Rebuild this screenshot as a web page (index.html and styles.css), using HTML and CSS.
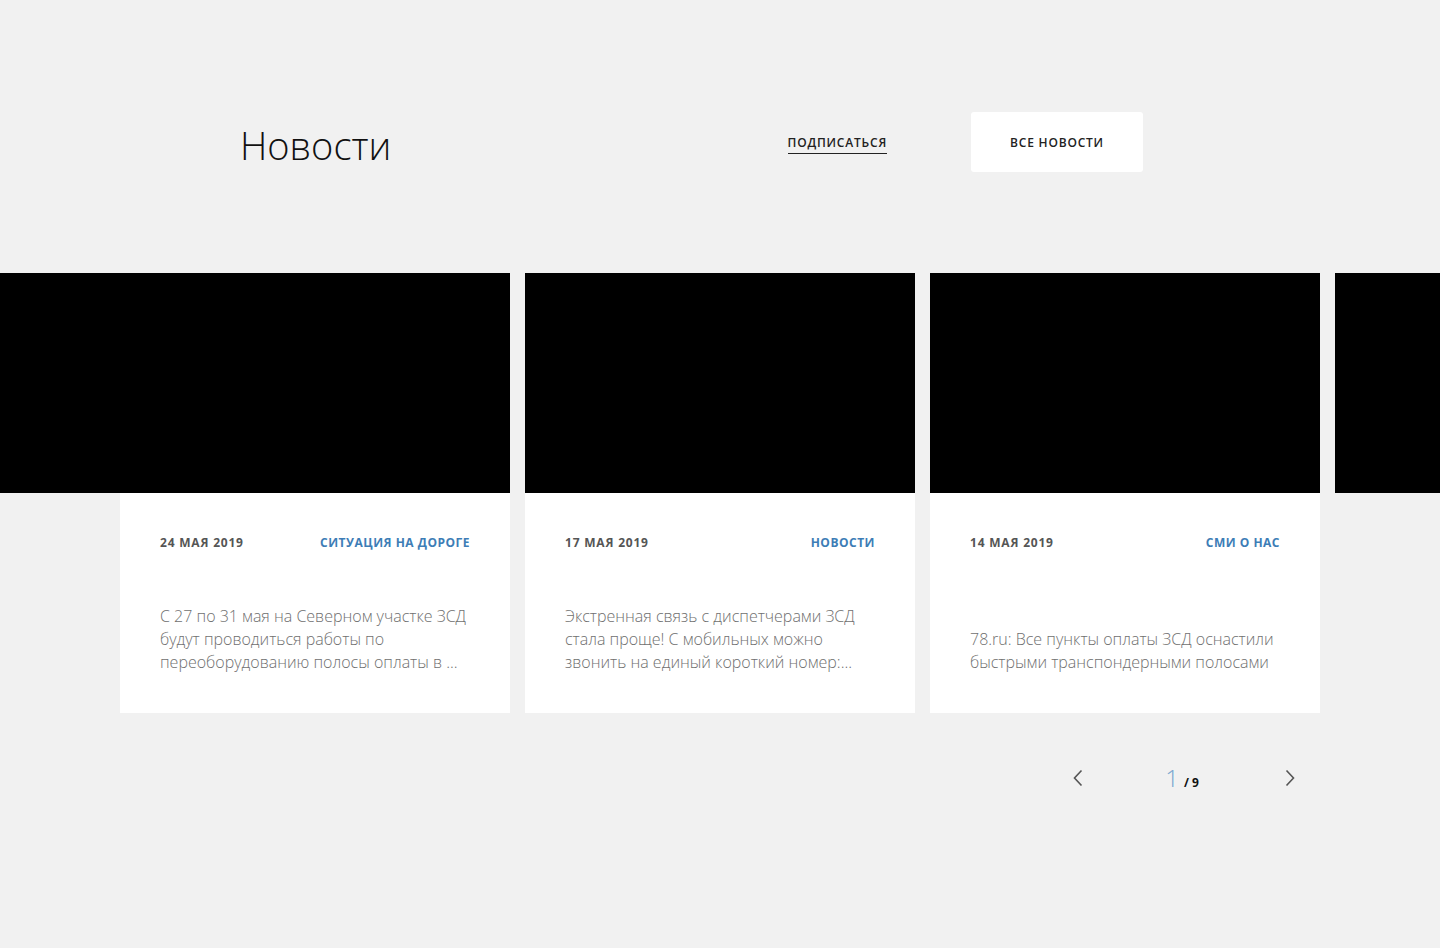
FILE: index.html
```html
<!DOCTYPE html>
<html lang="ru">
<head>
<meta charset="utf-8">
<title>Новости</title>
<link rel="stylesheet" href="styles.css">
</head>
<body>
<div class="page">
  <header class="head">
    <h1 class="title">Новости</h1>
    <a class="subscribe" href="#">Подписаться</a>
    <a class="all-btn" href="#">Все новости</a>
  </header>

  <section class="slider">
    <div class="track">
      <article class="card card-wide">
        <div class="pic"></div>
        <div class="body">
          <div class="meta"><span class="date">24 мая 2019</span><span class="cat">Ситуация на дороге</span></div>
          <p class="text">С 27 по 31 мая на Северном участке ЗСД будут проводиться работы по переоборудованию полосы оплаты в ...</p>
        </div>
      </article>
      <article class="card">
        <div class="pic"></div>
        <div class="body">
          <div class="meta"><span class="date">17 мая 2019</span><span class="cat">Новости</span></div>
          <p class="text">Экстренная связь с диспетчерами ЗСД стала проще! С мобильных можно звонить на единый короткий номер:...</p>
        </div>
      </article>
      <article class="card">
        <div class="pic"></div>
        <div class="body">
          <div class="meta"><span class="date">14 мая 2019</span><span class="cat">СМИ о нас</span></div>
          <p class="text">78.ru: Все пункты оплаты ЗСД оснастили быстрыми транспондерными полосами</p>
        </div>
      </article>
      <article class="card card-peek">
        <div class="pic"></div>
      </article>
    </div>
  </section>

  <nav class="pager">
    <button class="arrow" aria-label="Назад">
      <svg width="12" height="18" viewBox="0 0 12 18"><path d="M9.5 1.5 L2.5 9 L9.5 16.5" fill="none" stroke="#555" stroke-width="1.6"/></svg>
    </button>
    <div class="count"><span class="cur">1</span><span class="total">/ 9</span></div>
    <button class="arrow" aria-label="Вперёд">
      <svg width="12" height="18" viewBox="0 0 12 18"><path d="M2.5 1.5 L9.5 9 L2.5 16.5" fill="none" stroke="#555" stroke-width="1.6"/></svg>
    </button>
  </nav>
</div>
</body>
</html>
```

FILE: styles.css
```css
* { box-sizing: border-box; }
html, body { margin: 0; padding: 0; }
body {
  background: #f1f1f1;
  font-family: "Open Sans", "Noto Sans", sans-serif;
  color: #222;
  width: 1440px;
  height: 948px;
  overflow: hidden;
}
.page { padding-top: 112px; }

.head {
  display: flex;
  align-items: center;
  margin-left: 240px;
  width: 903px;
  height: 60px;
}
.title {
  flex: 1;
  margin: 0;
  padding-top: 6px;
  font-size: 38px;
  font-weight: 300;
  line-height: 48px;
  color: #111;
}
.subscribe {
  margin-right: 84px;
  font-size: 12px;
  font-weight: 600;
  letter-spacing: 0.8px;
  text-transform: uppercase;
  color: #222;
  text-decoration: none;
  border-bottom: 1px solid #222;
  padding-bottom: 2px;
  line-height: 16px;
  margin-top: 4px;
}
.all-btn {
  width: 172px;
  height: 60px;
  display: flex;
  align-items: center;
  justify-content: center;
  background: #fff;
  border-radius: 3px;
  font-size: 12px;
  font-weight: 600;
  letter-spacing: 0.8px;
  text-transform: uppercase;
  color: #222;
  text-decoration: none;
}

.slider {
  margin-top: 101px;
  width: 1440px;
  overflow: hidden;
}
.track {
  display: flex;
  align-items: flex-start;
  gap: 15px;
  margin-left: 120px;
}
.card {
  flex: 0 0 390px;
  width: 390px;
}
.pic {
  height: 220px;
  background: #000;
}
.card-wide .pic {
  margin-left: -120px;
  width: 510px;
}
.body {
  height: 220px;
  background: #fff;
  padding: 41px 40px 39px;
  display: flex;
  flex-direction: column;
  justify-content: space-between;
}
.meta {
  display: flex;
  justify-content: space-between;
  font-size: 12px;
  font-weight: 700;
  text-transform: uppercase;
  line-height: 18px;
}
.date { color: #555; letter-spacing: 0.8px; }
.cat { color: #3d7db6; letter-spacing: 0.5px; }
.text {
  margin: 0;
  font-size: 16px;
  font-weight: 300;
  line-height: 23px;
  color: #6f6f6f;
}

.pager {
  margin-top: 51px;
  margin-left: 1068px;
  width: 232px;
  display: flex;
  align-items: center;
  justify-content: space-between;
}
.arrow {
  border: 0;
  background: none;
  padding: 0 4px;
  display: flex;
  cursor: pointer;
}
.count {
  display: flex;
  align-items: baseline;
  gap: 5px;
  margin-right: 4px;
}
.cur {
  font-size: 24px;
  font-weight: 300;
  color: #7aa7cf;
  line-height: 28px;
}
.total {
  font-size: 12px;
  font-weight: 700;
  color: #111;
}
```
